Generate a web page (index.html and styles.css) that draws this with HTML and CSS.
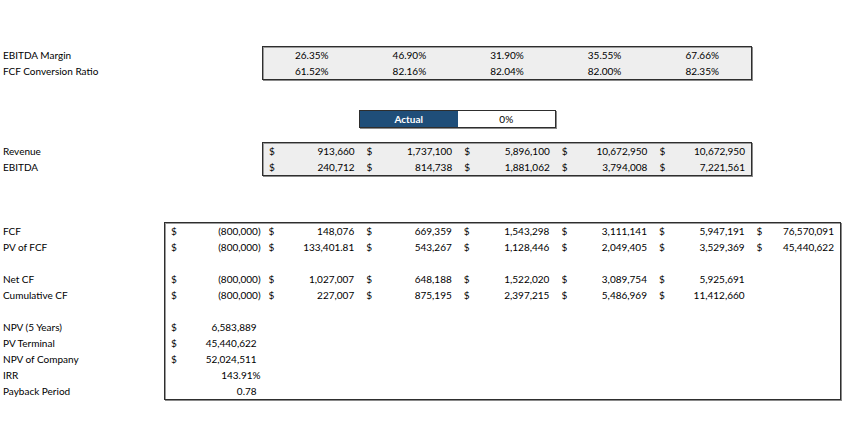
FILE: index.html
```html
<!DOCTYPE html>
<html lang="en">
  <head>
    <meta charset="utf-8" />
    <meta name="viewport" content="width=device-width, initial-scale=1" />
    <title>DCF summary</title>
    <link rel="stylesheet" href="styles.css">
  </head>
  <body>
    <main class="sheet">
      <section class="block ratios">
        <div class="labels">
          <div>EBITDA Margin</div>
          <div>FCF Conversion Ratio</div>
        </div>
        <div class="box shaded five">
          <div class="row pct"><span>26.35%</span><span>46.90%</span><span>31.90%</span><span>35.55%</span><span>67.66%</span></div>
          <div class="row pct"><span>61.52%</span><span>82.16%</span><span>82.04%</span><span>82.00%</span><span>82.35%</span></div>
        </div>
      </section>

      <section class="block toggle">
        <div class="labels"></div>
        <div class="switch">
          <span class="on">Actual</span>
          <span class="off">0%</span>
        </div>
      </section>

      <section class="block revenue">
        <div class="labels">
          <div>Revenue</div>
          <div>EBITDA</div>
        </div>
        <div class="box shaded five">
          <div class="row">
            <span class="acct"><i>$</i><b>913,660</b></span>
            <span class="acct"><i>$</i><b>1,737,100</b></span>
            <span class="acct"><i>$</i><b>5,896,100</b></span>
            <span class="acct"><i>$</i><b>10,672,950</b></span>
            <span class="acct"><i>$</i><b>10,672,950</b></span>
          </div>
          <div class="row">
            <span class="acct"><i>$</i><b>240,712</b></span>
            <span class="acct"><i>$</i><b>814,738</b></span>
            <span class="acct"><i>$</i><b>1,881,062</b></span>
            <span class="acct"><i>$</i><b>3,794,008</b></span>
            <span class="acct"><i>$</i><b>7,221,561</b></span>
          </div>
        </div>
      </section>

      <section class="block cashflow">
        <div class="labels">
          <div>FCF</div>
          <div>PV of FCF</div>
          <div></div>
          <div>Net CF</div>
          <div>Cumulative CF</div>
          <div></div>
          <div>NPV (5 Years)</div>
          <div>PV Terminal</div>
          <div>NPV of Company</div>
          <div>IRR</div>
          <div>Payback Period</div>
        </div>
        <div class="box seven">
          <div class="row">
            <span class="acct neg"><i>$</i><b>(800,000)</b></span>
            <span class="acct"><i>$</i><b>148,076</b></span>
            <span class="acct"><i>$</i><b>669,359</b></span>
            <span class="acct"><i>$</i><b>1,543,298</b></span>
            <span class="acct"><i>$</i><b>3,111,141</b></span>
            <span class="acct"><i>$</i><b>5,947,191</b></span>
            <span class="acct"><i>$</i><b>76,570,091</b></span>
          </div>
          <div class="row">
            <span class="acct neg"><i>$</i><b>(800,000)</b></span>
            <span class="acct"><i>$</i><b>133,401.81</b></span>
            <span class="acct"><i>$</i><b>543,267</b></span>
            <span class="acct"><i>$</i><b>1,128,446</b></span>
            <span class="acct"><i>$</i><b>2,049,405</b></span>
            <span class="acct"><i>$</i><b>3,529,369</b></span>
            <span class="acct"><i>$</i><b>45,440,622</b></span>
          </div>
          <div class="row"></div>
          <div class="row">
            <span class="acct neg"><i>$</i><b>(800,000)</b></span>
            <span class="acct"><i>$</i><b>1,027,007</b></span>
            <span class="acct"><i>$</i><b>648,188</b></span>
            <span class="acct"><i>$</i><b>1,522,020</b></span>
            <span class="acct"><i>$</i><b>3,089,754</b></span>
            <span class="acct"><i>$</i><b>5,925,691</b></span>
          </div>
          <div class="row">
            <span class="acct neg"><i>$</i><b>(800,000)</b></span>
            <span class="acct"><i>$</i><b>227,007</b></span>
            <span class="acct"><i>$</i><b>875,195</b></span>
            <span class="acct"><i>$</i><b>2,397,215</b></span>
            <span class="acct"><i>$</i><b>5,486,969</b></span>
            <span class="acct"><i>$</i><b>11,412,660</b></span>
          </div>
          <div class="row"></div>
          <div class="row"><span class="acct"><i>$</i><b>6,583,889</b></span></div>
          <div class="row"><span class="acct"><i>$</i><b>45,440,622</b></span></div>
          <div class="row"><span class="acct"><i>$</i><b>52,024,511</b></span></div>
          <div class="row"><span class="acct neg"><i></i><b>143.91%</b></span></div>
          <div class="row"><span class="acct"><i></i><b>0.78</b></span></div>
        </div>
      </section>
    </main>
  </body>
</html>
```

FILE: styles.css
```css
* {box-sizing: border-box}
body {
  margin: 0;
  background: white;
  color: #000;
  font-family: Lato, "Liberation Sans", sans-serif;
  font-size: 10px;
  line-height: 16px;
}
.sheet {
  width: 850px;
  padding: 47px 0 30px;
}
.block {
  display: flex;
  align-items: flex-start;
}
.labels {
  width: 165px;
  flex: none;
}
.labels div {
  height: 16px;
  padding-left: 3px;
  white-space: nowrap;
}
.box {
  border: 1px solid #2e2e2e;
  box-shadow: 1px 1px 0 #8a8a8a, inset 1px 1px 0 #9a9a9a;
  margin: -1px 0 -1px -1px;
}
.shaded {background-color: #eeeeee}
.row {
  display: grid;
  height: 16px;
}
.five {margin-left: 97px}
.five .row {grid-template-columns: repeat(5, 97.6px)}
.seven .row {grid-template-columns: repeat(6, 97.6px) 89.4px}
.pct span {text-align: center}
.acct {
  display: flex;
  justify-content: space-between;
  padding: 0 6px 0 6px;
}
.acct i, .acct b {
  font-style: normal;
  font-weight: normal;
}
.acct.neg {padding-right: 2px}

.toggle {margin-top: 32px}
.revenue {margin-top: 16px}
.cashflow {margin-top: 48px}
.switch {
  display: flex;
  margin: -1px 0 -1px 194px;
  border: 1px solid #2e2e2e;
  box-shadow: 1px 1px 0 #8a8a8a;
}
.switch span {
  width: 97.5px;
  height: 16px;
  text-align: center;
}
.switch .on {
  background-color: #1f4e79;
  color: white;
  font-weight: bold;
}
.switch .off {background-color: white}
```
